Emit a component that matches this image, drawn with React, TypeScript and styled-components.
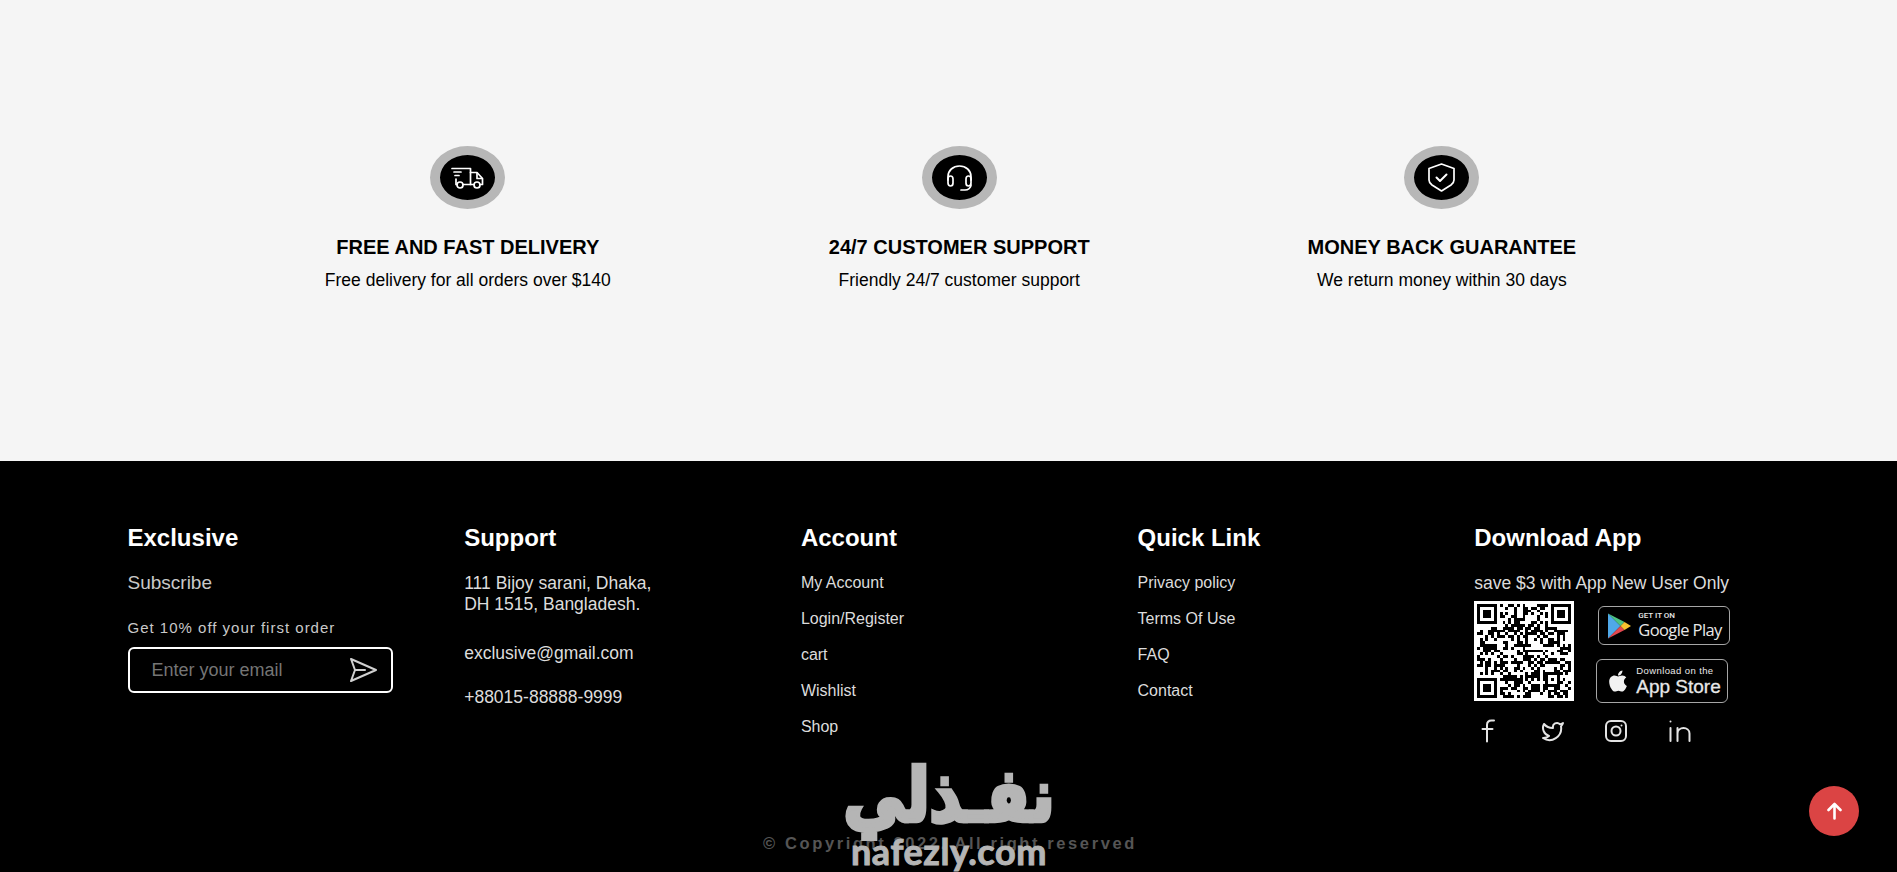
import { FC, useMemo } from 'react'
import { FaApple } from 'react-icons/fa'
import styled, { createGlobalStyle } from 'styled-components'

const GlobalStyle = createGlobalStyle`
  html, body {
    margin: 0;
    padding: 0;
    background: #000;
    font-family: 'Liberation Sans', Arial, sans-serif;
  }
  * {
    box-sizing: border-box;
  }
`

const Page = styled.div`
  position: relative;
  width: 100%;
  height: 872px;
  overflow: hidden;
  display: flex;
  flex-direction: column;
`

const Services = styled.section`
  height: 461px;
  background: #f5f5f5;
  display: flex;
  justify-content: center;
  align-items: flex-start;
  gap: 218px;
  padding: 146px 0 0 4px;
`

const Service = styled.div`
  display: flex;
  flex-direction: column;
  align-items: center;
  color: #000;
`

const IconRing = styled.div`
  width: 75px;
  height: 63px;
  border-radius: 50%;
  background: #000;
  border: solid #b7b7b7;
  border-width: 9px 10px;
  display: flex;
  align-items: center;
  justify-content: center;
`

const ServiceTitle = styled.h3`
  margin: 26px 0 0;
  font-size: 20px;
  line-height: 24px;
  font-weight: 700;
  white-space: nowrap;
`

const ServiceText = styled.p`
  margin: 11px 0 0;
  font-size: 17.5px;
  line-height: 20px;
  white-space: nowrap;
`

const Footer = styled.footer`
  flex: 1;
  background: #000;
  display: flex;
  flex-direction: column;
  padding-top: 64px;
`

const Columns = styled.div`
  display: grid;
  grid-template-columns: repeat(5, 336.7px);
  padding-left: 127.5px;
`

const Column = styled.div`
  display: flex;
  flex-direction: column;
  align-items: flex-start;
`

const ColumnTitle = styled.h4`
  margin: 0 0 22px;
  color: #fff;
  font-size: 24px;
  line-height: 26px;
  font-weight: 700;
`

const Subscribe = styled.div`
  color: #c9c9c9;
  font-size: 19px;
  line-height: 20px;
`

const Offer = styled.div`
  margin-top: 26px;
  color: #c9c9c9;
  font-size: 15px;
  line-height: 18px;
  letter-spacing: 1px;
`

const EmailBox = styled.div`
  margin-top: 10px;
  width: 265px;
  height: 46px;
  border: 2px solid #fff;
  border-radius: 6px;
  padding: 0 13px 0 22px;
  display: flex;
  align-items: center;
  justify-content: space-between;
`

const Placeholder = styled.span`
  color: #757575;
  font-size: 18px;
`

const Address = styled.div`
  color: #dcdcdc;
  font-size: 17.5px;
  line-height: 20.5px;
`

const Contact = styled.div<{ $gap: number }>`
  margin-top: ${p => p.$gap}px;
  color: #dcdcdc;
  font-size: 17.5px;
  line-height: 20px;
`

const Links = styled.nav`
  display: flex;
  flex-direction: column;
  gap: 16px;
`

const FooterLink = styled.a`
  color: #dcdcdc;
  font-size: 16px;
  line-height: 20px;
  text-decoration: none;
`

const AppNote = styled.div`
  color: #dcdcdc;
  font-size: 17.5px;
  line-height: 20px;
  white-space: nowrap;
`

const AppRow = styled.div`
  margin-top: 8px;
  display: flex;
  gap: 22px;
`

const QrFrame = styled.svg`
  display: block;
  width: 100px;
  height: 100px;
  background: #fff;
  filter: blur(0.35px);
`

const Badges = styled.div`
  display: flex;
  flex-direction: column;
  gap: 14px;
  padding-top: 5px;
`

const Badge = styled.div<{ $offset: number; $height: number }>`
  margin-left: ${p => p.$offset}px;
  width: 132px;
  height: ${p => p.$height}px;
  border: 1px solid #a6a6a6;
  border-radius: 6px;
  background: #000;
  display: flex;
  align-items: center;
  color: #e8e8e8;
`

const BadgeLogo = styled.span<{ $left: number; $gap: number }>`
  display: flex;
  margin-left: ${p => p.$left}px;
  margin-right: ${p => p.$gap}px;
`

const BadgeText = styled.div`
  display: flex;
  flex-direction: column;
`

const PlaySmall = styled.span`
  font-family: Roboto, sans-serif;
  font-size: 8px;
  line-height: 9px;
  font-weight: 500;
`

const PlayBig = styled.span`
  font-family: 'Open Sans', sans-serif;
  font-size: 16.5px;
  line-height: 20px;
  letter-spacing: -0.6px;
  white-space: nowrap;
`

const StoreSmall = styled.span`
  font-size: 9.5px;
  line-height: 11px;
  letter-spacing: 0.4px;
  white-space: nowrap;
`

const StoreBig = styled.span`
  font-size: 19px;
  line-height: 21px;
  white-space: nowrap;
  -webkit-text-stroke: 0.3px #e8e8e8;
`

const Socials = styled.div`
  margin-top: 16px;
  margin-left: 3px;
  display: flex;
  gap: 39.5px;
`

const SocialIcon = styled.svg`
  display: block;
  width: 24px;
  height: 24px;
  fill: none;
  stroke: #e4e4e4;
  stroke-width: 2;
  stroke-linecap: round;
  stroke-linejoin: round;
`

const Copyright = styled.div`
  margin-top: auto;
  padding: 0 0 19px 3px;
  text-align: center;
  color: #555;
  font-size: 16.5px;
  line-height: 20px;
  letter-spacing: 2.6px;
  font-weight: 700;
`

const Watermark = styled.div`
  position: absolute;
  left: 843px;
  top: 752px;
  width: 212px;
  display: flex;
  flex-direction: column;
  align-items: center;
  color: #b5b5b5;
  pointer-events: none;
`

const WatermarkArabic = styled.span`
  font-family: 'DejaVu Sans', sans-serif;
  font-size: 62px;
  line-height: 88px;
  font-weight: 700;
  white-space: nowrap;
  -webkit-text-stroke: 4px #b5b5b5;
  transform: scaleY(1.18);
`

const WatermarkLatin = styled.span`
  margin-top: -7px;
  font-family: Lato, sans-serif;
  font-size: 36px;
  line-height: 36px;
  font-weight: 700;
  letter-spacing: 0.6px;
  white-space: nowrap;
  -webkit-text-stroke: 1px #b5b5b5;
`

const ScrollTop = styled.button`
  position: absolute;
  left: 1809px;
  top: 786px;
  width: 50px;
  height: 50px;
  border: 0;
  padding: 0;
  border-radius: 50%;
  background: #db4444;
  display: flex;
  align-items: center;
  justify-content: center;
`

const TruckIcon = () => (
  <svg width="33" height="22" viewBox="0 0 33 22" fill="none" stroke="#fff" strokeWidth="1.7" strokeLinecap="round" strokeLinejoin="round">
    <path d="M1 1.5h18.5v16H12" />
    <path d="M19.5 5.5h6.5l5.5 6v6H29" />
    <path d="M19.5 17.500h3" />
    <path d="M26 6v5.500h5" />
    <circle cx="9" cy="18" r="3" />
    <circle cx="26" cy="18" r="3" />
    <path d="M3 5h7M4 8.500h4M5 12v5.500h1" />
  </svg>
)

const HeadsetIcon = () => (
  <svg width="29" height="26" viewBox="0 0 29 26" fill="none" stroke="#fff" strokeWidth="1.7" strokeLinecap="round" strokeLinejoin="round">
    <path d="M3 15V11.500C3 5.500 8 1 14.500 1S26 5.500 26 11.500V15" />
    <path d="M3 14c0-2 1-3 2.500-3S8 12 8 14v4c0 2-1 3-2.500 3S3 20 3 18z" />
    <path d="M21 14c0-2 1-3 2.500-3s2.500 1 2.500 3v4c0 2-1 3-2.500 3S21 20 21 18z" />
    <path d="M26 20c0 3-3 5-6 5h-4" />
  </svg>
)

const ShieldIcon = () => (
  <svg width="29" height="29" viewBox="0 0 29 29" fill="none" stroke="#fff" strokeWidth="1.7" strokeLinecap="round" strokeLinejoin="round">
    <path d="M14.500 1L27 5.500V17c0 2-1 3.500-3 5l-9.500 6L5 22c-2-1.500-3-3-3-5V5.500z" />
    <path d="M9.500 14.500l3.500 3.500 6.500-6.500" strokeWidth="2" />
  </svg>
)

const SendIcon = () => (
  <svg width="29" height="26" viewBox="0 0 29 26" fill="none" stroke="#d0d0d0" strokeWidth="2" strokeLinecap="round" strokeLinejoin="round">
    <path d="M2 2l25 11L2 24l4-11z" />
    <path d="M6 13h10" />
  </svg>
)

const PlayLogo = () => (
  <svg width="23" height="26" viewBox="0 0 23 26">
    <path d="M0 0.500L12.500 13 0 25.500z" fill="#4fa8e8" />
    <path d="M0 0.500L16.500 9 12.500 13z" fill="#4cc384" />
    <path d="M0 25.500L16.500 17 12.500 13z" fill="#e2484f" />
    <path d="M16.500 9L23 13l-6.500 4-4-4z" fill="#f7c32f" />
  </svg>
)

const ArrowUp = () => (
  <svg width="15" height="18" viewBox="0 0 15 18" fill="none" stroke="#fff" strokeWidth="2.600" strokeLinecap="round" strokeLinejoin="round">
    <path d="M7.500 16.500V2M1.500 8l6-6 6 6" />
  </svg>
)

const QR_SIZE = 33

// finder and alignment squares are fixed, the rest of the modules come from a small seeded generator
const useQrCells = () =>
  useMemo(() => {
    const cells: [number, number][] = []
    let seed = 20220
    const isFixed = (x: number, y: number) =>
      (x < 8 && y < 8) ||
      (x >= QR_SIZE - 8 && y < 8) ||
      (x < 8 && y >= QR_SIZE - 8) ||
      (x >= 24 && x <= 28 && y >= 24 && y <= 28)
    for (let y = 0; y < QR_SIZE; y++) {
      for (let x = 0; x < QR_SIZE; x++) {
        seed = (seed * 1103515245 + 12345) & 0x7fffffff
        if (!isFixed(x, y) && (seed >> 16) % 100 < 50) cells.push([x, y])
      }
    }
    return cells
  }, [])

const Finder: FC<{ x: number; y: number; size: number; dot: number }> = ({ x, y, size, dot }) => (
  <>
    <path
      d={`M${x} ${y}h${size}v${size}h-${size}z M${x + 1} ${y + 1}v${size - 2}h${size - 2}v-${size - 2}z`}
      fillRule="evenodd"
    />
    <rect x={x + (size - dot) / 2} y={y + (size - dot) / 2} width={dot} height={dot} />
  </>
)

const QrCode = () => {
  const cells = useQrCells()
  return (
    <QrFrame viewBox="-1 -1 35 35" shapeRendering="crispEdges">
      {cells.map(([x, y]) => (
        <rect key={`${x}-${y}`} x={x} y={y} width="1" height="1" />
      ))}
      <Finder x={0} y={0} size={7} dot={3} />
      <Finder x={26} y={0} size={7} dot={3} />
      <Finder x={0} y={26} size={7} dot={3} />
      <Finder x={24} y={24} size={5} dot={1} />
    </QrFrame>
  )
}

const services = [
  { icon: <TruckIcon />, title: 'FREE AND FAST DELIVERY', text: 'Free delivery for all orders over $140' },
  { icon: <HeadsetIcon />, title: '24/7 CUSTOMER SUPPORT', text: 'Friendly 24/7 customer support' },
  { icon: <ShieldIcon />, title: 'MONEY BACK GUARANTEE', text: 'We return money within 30 days' }
]

const accountLinks = ['My Account', 'Login/Register', 'cart', 'Wishlist', 'Shop']
const quickLinks = ['Privacy policy', 'Terms Of Use', 'FAQ', 'Contact']

const App: FC = () => (
  <Page>
    <GlobalStyle />
    <Services>
      {services.map(item => (
        <Service key={item.title}>
          <IconRing>{item.icon}</IconRing>
          <ServiceTitle>{item.title}</ServiceTitle>
          <ServiceText>{item.text}</ServiceText>
        </Service>
      ))}
    </Services>
    <Footer>
      <Columns>
        <Column>
          <ColumnTitle>Exclusive</ColumnTitle>
          <Subscribe>Subscribe</Subscribe>
          <Offer>Get 10% off your first order</Offer>
          <EmailBox>
            <Placeholder>Enter your email</Placeholder>
            <SendIcon />
          </EmailBox>
        </Column>
        <Column>
          <ColumnTitle>Support</ColumnTitle>
          <Address>
            111 Bijoy sarani, Dhaka,
            <br />
            DH 1515, Bangladesh.
          </Address>
          <Contact $gap={29}>exclusive@gmail.com</Contact>
          <Contact $gap={24}>+88015-88888-9999</Contact>
        </Column>
        <Column>
          <ColumnTitle>Account</ColumnTitle>
          <Links>
            {accountLinks.map(link => (
              <FooterLink key={link}>{link}</FooterLink>
            ))}
          </Links>
        </Column>
        <Column>
          <ColumnTitle>Quick Link</ColumnTitle>
          <Links>
            {quickLinks.map(link => (
              <FooterLink key={link}>{link}</FooterLink>
            ))}
          </Links>
        </Column>
        <Column>
          <ColumnTitle>Download App</ColumnTitle>
          <AppNote>save $3 with App New User Only</AppNote>
          <AppRow>
            <QrCode />
            <Badges>
              <Badge $offset={2} $height={39}>
                <BadgeLogo $left={9} $gap={7}>
                  <PlayLogo />
                </BadgeLogo>
                <BadgeText>
                  <PlaySmall>GET IT ON</PlaySmall>
                  <PlayBig>Google Play</PlayBig>
                </BadgeText>
              </Badge>
              <Badge $offset={0} $height={44}>
                <BadgeLogo $left={9} $gap={6}>
                  <FaApple size={24} color="#f2f2f2" />
                </BadgeLogo>
                <BadgeText>
                  <StoreSmall>Download on the</StoreSmall>
                  <StoreBig>App Store</StoreBig>
                </BadgeText>
              </Badge>
            </Badges>
          </AppRow>
          <Socials>
            <SocialIcon viewBox="0 0 24 24">
              <path d="M17 1.500h-2.500c-2.800 0-4.500 1.700-4.500 4.500v16.500M5.500 10h10" />
            </SocialIcon>
            <SocialIcon viewBox="0 0 24 24">
              <path d="M22 4s-.7 2.100-2 3.400c1.600 10-9.400 17.300-18 11.600 2.200.1 4.400-.6 6-2C3 15.500.5 9.600 3 5c2.200 2.600 5.600 4.100 9 4-.9-4.200 4-6.600 7-3.800 1.100 0 3-1.200 3-1.200z" />
            </SocialIcon>
            <SocialIcon viewBox="0 0 24 24">
              <rect x="2" y="2" width="20" height="20" rx="5" />
              <circle cx="12" cy="12" r="4.500" />
              <path d="M17.500 6.500h.01" />
            </SocialIcon>
            <SocialIcon viewBox="0 0 24 24">
              <path d="M2.500 9v13M2.500 2.500v.01M9.500 22V9M9.500 14.500c0-3.500 3-5.500 6-5.500s6 2 6 5.500V22" />
            </SocialIcon>
          </Socials>
        </Column>
      </Columns>
      <Copyright>© Copyright 2022. All right reserved</Copyright>
    </Footer>
    <Watermark>
      <WatermarkArabic dir="rtl" lang="ar">نفـذلي</WatermarkArabic>
      <WatermarkLatin>nafezly.com</WatermarkLatin>
    </Watermark>
    <ScrollTop aria-label="Back to top">
      <ArrowUp />
    </ScrollTop>
  </Page>
)

export default App
